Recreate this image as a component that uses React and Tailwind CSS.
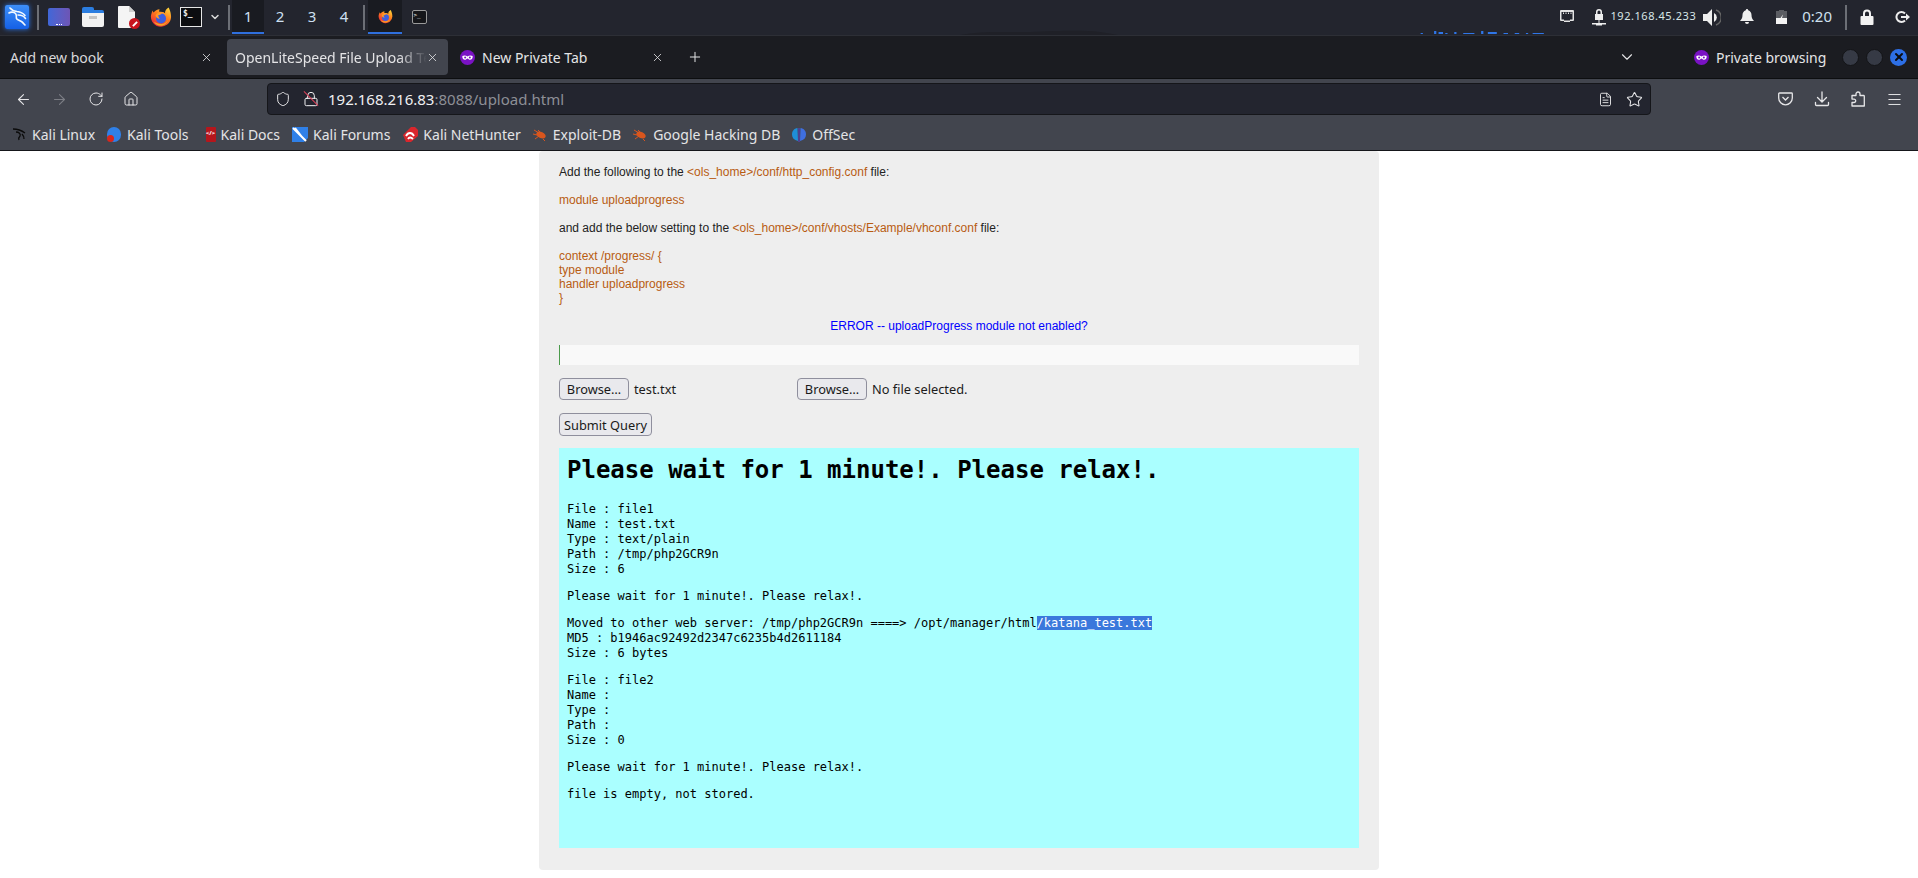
import React from "react";
import { ArrowLeft, ArrowRight, RotateCw, Home, Shield, Lock, FileText, Star, Menu, X, Plus, ChevronDown } from "lucide-react";

const uiFont = "font-['Noto_Sans',sans-serif]";

function Firefox({ size = 22, id }) {
  return (
    <svg width={size} height={size} viewBox="0 0 24 24">
      <defs>
        <linearGradient id={id} x1="0.8" y1="0" x2="0.2" y2="1">
          <stop offset="0" stopColor="#ffd43a" />
          <stop offset="0.45" stopColor="#ff7a1c" />
          <stop offset="1" stopColor="#e8203f" />
        </linearGradient>
      </defs>
      <path d="M20.5 1.5c.5 2 2.5 5 2.5 10.500A11 11 0 1 1 1.800 7.500c.3-1 .6-1.800 1.200-2.500 0 1 .4 1.700 1 2.200C5.500 5 8 3.800 10.500 3.500 9.800 5 10 6 10.500 6.500c2.500-.5 5 .5 6 2-.6-3 1-5.500 4-7z" fill={`url(#${id})`} />
      <circle cx="12" cy="13.500" r="5.500" fill="#3d5fe0" />
      <path d="M6 10c1.500-2.500 4-3.500 6.500-3.500 2.500 0 4.500 1.500 5.500 3.500-2-1.500-4-2-5.500-1.500-.5 1-2 1.500-3.500 1.500 0 1 .5 3 2 4-3 0-5-2-5-4z" fill="#ff9a28" />
      <path d="M4 17c2 4 6 5 9 4.500 3-.5 6-3 6.500-6-1.500 2.500-4 4-7 4-3.500 0-6-1-8.500-2.500z" fill="#f5a524" />
    </svg>
  );
}

function KaliLogo() {
  return (
    <div className="w-6 h-6 rounded-[2px] bg-gradient-to-b from-[#3d8ef8] to-[#1560e6] shadow-[0_0_5px_#2a78f0] flex items-center justify-center">
      <svg width="24" height="24" viewBox="0 0 24 24" fill="none" stroke="#f2f8ff" strokeWidth="1.600" strokeLinecap="round" strokeLinejoin="round">
        <path d="M5 3c1.500 2 4 3 7 3.500 3.500.5 6 1.500 8 4" />
        <path d="M4 8c2-1.500 5-1 6.500.5 1.500 1.500 .5 3.500 1 5 .5 1.500 3 1.500 5 3 1.500 1 2.500 2.500 3.500 3.500" />
        <path d="M13 10c3 0 6 1 7.500 3.500" />
      </svg>
    </div>
  );
}

function Sep() {
  return <div className="w-0.5 h-[25px] bg-[#6c6f76] shrink-0" />;
}

function TerminalBig() {
  return (
    <div className="w-[22px] h-5 bg-[#0c0d10] border border-[#e6e6e6] text-[#eee] font-['DejaVu_Sans_Mono',monospace] text-[8px] font-bold leading-[11px] pl-0.5">$_</div>
  );
}

function PrivateMask({ size = 15 }) {
  return (
    <svg width={size} height={size} viewBox="0 0 16 16" className="shrink-0">
      <circle cx="8" cy="8" r="8" fill="#7a12c4" />
      <path d="M2.500 6.500C4 5.500 6.500 5.800 8 6.800 9.500 5.800 12 5.500 13.500 6.500c.3 2.500-1 4-2.700 4C9.500 10.500 9 9 8 9s-1.500 1.500-2.800 1.500c-1.700 0-3-1.500-2.700-4z" fill="#fff" />
      <circle cx="5.500" cy="8" r="1.100" fill="#7a12c4" />
      <circle cx="10.500" cy="8" r="1.100" fill="#7a12c4" />
    </svg>
  );
}

function Workspace({ n, active }) {
  return (
    <div className={`w-8 h-[34px] flex items-center justify-center text-[15px] text-[#cfe0f2] border-b-2 ${active ? "bg-[#191b21] border-[#2f6fdd]" : "border-transparent"}`}>{n}</div>
  );
}

function TopPanel() {
  return (
    <div className={`relative h-[36px] bg-[#23252e] border-b border-[#2d2f36] flex items-start ${uiFont} overflow-hidden`}>
      <div className="ml-[5px] mt-[5px]"><KaliLogo /></div>
      <div className="ml-[8px] mt-[5px]"><Sep /></div>
      <div className="ml-[9px] mt-[8px] w-[22px] h-[18px] rounded-[2px] bg-gradient-to-r from-[#3f67d8] to-[#6d55b5] flex items-end justify-center pb-px">
        <span className="w-[6px] h-0.5 border-b border-dotted border-white" />
      </div>
      <div className="ml-[12px] mt-[7px] w-[22px] h-[20px] relative">
        <div className="absolute left-0 top-0 w-[12px] h-[6px] bg-[#2b7de0] rounded-t-[2px]" />
        <div className="absolute left-0 right-0 top-[3px] h-[4px] bg-[#2b7de0] rounded-t-[2px]" />
        <div className="absolute left-0 right-0 top-[6px] bottom-0 bg-[#f2f2f2] rounded-b-[2px] flex justify-center pt-[3px]">
          <span className="w-[8px] h-[3px] bg-[#c4c4c4]" />
        </div>
      </div>
      <div className="ml-[14px] mt-[6px] w-[22px] h-[23px] relative">
        <svg width="18" height="22" viewBox="0 0 18 22"><path d="M1 0h10l6 6v15a1 1 0 0 1-1 1H1a1 1 0 0 1-1-1V1a1 1 0 0 1 1-1z" fill="#f4f4f4" /><path d="M11 0l6 6h-6z" fill="#cfcfcf" /></svg>
        <div className="absolute right-0 bottom-0 w-[11px] h-[11px] rounded-full bg-[#c8141e] flex items-center justify-center">
          <span className="w-[6px] h-[2px] bg-white -rotate-45" />
        </div>
      </div>
      <div className="ml-[10px] mt-[6px]"><Firefox id="ff1" /></div>
      <div className="ml-[8px] mt-[7px]"><TerminalBig /></div>
      <ChevronDown size={12} strokeWidth={3} color="#d8d8d8" className="ml-[7px] mt-[11px]" />
      <div className="ml-[7px] mt-[5px]"><Sep /></div>
      <div className="ml-[2px] flex">
        <Workspace n="1" active />
        <Workspace n="2" />
        <Workspace n="3" />
        <Workspace n="4" />
      </div>
      <div className="ml-[3px] mt-[5px]"><Sep /></div>
      <div className="ml-[3px] w-[34px] h-[34px] bg-[#191b21] border-b-2 border-[#2f6fdd] flex items-center justify-center"><Firefox size={15} id="ff2" /></div>
      <div className="w-[34px] h-[34px] flex items-center justify-center">
        <div className="w-[15px] h-[14px] bg-[#15161a] border border-[#9a9a9a] rounded-[2px] text-white font-['DejaVu_Sans_Mono',monospace] text-[6px] leading-[8px] pl-px">&gt;_</div>
      </div>

      {/* wallpaper bits behind the panel */}
      <svg className="absolute left-[900px] bottom-0" width="700" height="12" viewBox="0 0 700 12">
        <path d="M60 12C80 8 100 9 130 9c30-1 50-2 70 0 10 1 15 3 20 3z" fill="#1f2027" />
        <path d="M522 10h2v1h-2zM534 8h2v3h-2zM538 9h4v2h-4zM544 10h2v1h-2zM552 9h2v2h-2zM560 10h10v1h-10zM576 8h2v3h-2zM582 9h8v2h-8zM596 10h4v1h-4zM606 10h4v1h-4zM616 10h2v1h-2zM622 10h10v1h-10z" fill="#2f76e8" transform="translate(-64 0) scale(1.120 1)" />
      </svg>

      <div className="relative ml-auto flex items-start text-[#e8e8e8]">
        <svg width="14" height="13" viewBox="0 0 14 13" className="mt-[10px]"><path d="M1 0h12a1 1 0 0 1 1 1v9a1 1 0 0 1-1 1h-3v1H4v-1H1a1 1 0 0 1-1-1V1a1 1 0 0 1 1-1z" fill="#e4e4e4" /><path d="M1.500 2h11v7.500h-2.500v1H4v-1H1.500z" fill="#23252e" /><path d="M3 2.500h1v1.500H3zm2.500 0h1v1.500h-1zm2.500 0h1v1.500H8zm2.500 0h1v1.500h-1z" fill="#e4e4e4" /></svg>
        <svg width="14" height="19" viewBox="0 0 14 19" className="ml-[18px] mt-[8px]"><path d="M4 6V4a3 3 0 0 1 6 0v2h1v6H3V6zm1.500 0h3V4a1.500 1.500 0 0 0-3 0z" fill="#eee" /><path d="M6.500 12h1v3H14v1.500H10v1H4v-1H0V15h6.500z" fill="#eee" /></svg>
        <span className="ml-[4px] mt-[8px] text-[11px] leading-[16px] tracking-[0.55px] text-[#d8e6e6]">192.168.45.233</span>
        <svg width="18" height="17" viewBox="0 0 18 17" className="ml-[7px] mt-[9px]"><path d="M0 5h4l5-5v17l-5-5H0z" fill="#eee" /><path d="M11 4a5 5 0 0 1 0 9z" fill="#eee" /><path d="M13 1a8 8 0 0 1 0 15" fill="none" stroke="#666" strokeWidth="1.500" /></svg>
        <svg width="14" height="15" viewBox="0 0 14 15" className="ml-[19px] mt-[9px]"><path d="M7 0a1.200 1.200 0 0 1 1.200 1.200C10.500 2 11.500 4 11.500 6c0 3 1 4 2.500 6H0c1.500-2 2.500-3 2.500-6 0-2 1-4 3.300-4.800A1.200 1.200 0 0 1 7 0zM5 13h4a2 2 0 0 1-4 0z" fill="#eee" /></svg>
        <svg width="11" height="14" viewBox="0 0 11 14" className="ml-[22px] mt-[10px]"><path d="M3 1V0h5v1h3v13H0V1z" fill="#5b5d63" /><path d="M0 8h4.500L7 4.500 6 8h5v6H0z" fill="#f4f4f4" /></svg>
        <span className="ml-[15px] mt-[6px] text-[15px] leading-[20px] text-[#cfe0ef]">0:20</span>
        <div className="ml-[13px] mt-[5px]"><Sep /></div>
        <svg width="14" height="16" viewBox="0 0 14 16" className="ml-[13px] mt-[9px]"><path d="M3 7V4.500a4 4 0 0 1 8 0V7h1.500a1 1 0 0 1 1 1v7a1 1 0 0 1-1 1h-11a1 1 0 0 1-1-1V8a1 1 0 0 1 1-1zm2 0h4V4.500a2 2 0 0 0-4 0z" fill="#f2f2f2" /></svg>
        <svg width="15" height="12" viewBox="0 0 15 12" className="ml-[21px] mr-[8px] mt-[11px]"><path d="M10 2.500A5 5 0 1 0 10 9.500" fill="none" stroke="#eee" strokeWidth="2" /><path d="M6 5h5V2.500L15 6l-4 3.500V7H6z" fill="#eee" /></svg>
      </div>
    </div>
  );
}

function TabBar() {
  return (
    <div className={`h-[43px] bg-[#1b1c21] border-b border-[#0d0e10] flex items-center text-[14px] text-[#e4e4e6] ${uiFont}`}>
      <div className="w-[227px] flex items-center pl-[10px] shrink-0">
        <span className="w-[190px] text-[#d8d8da]">Add new book</span>
        <X size={13} strokeWidth={1.5} />
      </div>
      <div className="w-[221px] h-[36px] rounded-[4px] bg-[#42454e] flex items-center pl-[8px] shrink-0">
        <span className="w-[192px] overflow-hidden whitespace-nowrap [mask-image:linear-gradient(to_right,black_85%,transparent)]">OpenLiteSpeed File Upload Test</span>
        <X size={13} strokeWidth={1.5} className="ml-[-1px]" />
      </div>
      <div className="ml-[12px] flex items-center shrink-0">
        <PrivateMask />
        <span className="ml-[7px] w-[169px]">New Private Tab</span>
        <X size={13} strokeWidth={1.5} />
      </div>
      <Plus size={16} strokeWidth={1.5} className="ml-[23px]" />
      <ChevronDown size={18} strokeWidth={1.5} className="ml-auto mr-[58px]" />
      <PrivateMask />
      <span className="ml-[7px] w-[126px]">Private browsing</span>
      <div className="flex gap-[7px] mr-[11px]">
        <span className="w-[17px] h-[17px] rounded-full bg-[#363a45] border border-[#131417]" />
        <span className="w-[17px] h-[17px] rounded-full bg-[#363a45] border border-[#131417]" />
        <span className="w-[17px] h-[17px] rounded-full bg-[#2d6fe6] flex items-center justify-center"><X size={12} strokeWidth={4} color="#0b0c10" /></span>
      </div>
    </div>
  );
}

function NavBar() {
  return (
    <div className={`h-[40px] bg-[#42454e] flex items-center text-[#e6e6e8] ${uiFont}`}>
      <ArrowLeft size={17} strokeWidth={1.5} className="ml-[15px]" />
      <ArrowRight size={17} strokeWidth={1.5} color="#7c7e85" className="ml-[19px]" />
      <RotateCw size={16} strokeWidth={1.5} className="ml-[20px]" />
      <Home size={16} strokeWidth={1.5} className="ml-[19px]" />
      <div className="ml-[128px] w-[1384px] h-[32px] bg-[#23252f] border border-[#15161a] rounded-[4px] flex items-center text-[15px] shrink-0">
        <Shield size={16} strokeWidth={1.5} className="ml-[7px]" />
        <span className="ml-[12px] relative text-[#f0f0f2]">
          <Lock size={16} strokeWidth={1.5} />
          <span className="absolute left-[-2px] top-[7px] w-[20px] h-px bg-[#e0405a] rotate-45" />
        </span>
        <span className="ml-[9px] text-[#f0f0f2]">192.168.216.83<span className="text-[#8d8f96]">:8088/upload.html</span></span>
        <FileText size={15} strokeWidth={1.5} className="ml-auto" />
        <Star size={17} strokeWidth={1.5} className="ml-[13px] mr-[7px]" />
      </div>
      <svg width="15" height="14" viewBox="0 0 15 14" className="ml-[127px]" fill="none" stroke="#e6e6e8" strokeWidth="1.300"><path d="M1.500 1h12a.8.8 0 0 1 .8.800V6a6.800 6.800 0 0 1-13.600 0V1.800A.8.8 0 0 1 1.500 1z" /><path d="M4.500 5l3 3 3-3" /></svg>
      <svg width="16" height="16" viewBox="0 0 16 16" className="ml-[21px]" fill="none" stroke="#e6e6e8" strokeWidth="1.300" strokeLinecap="round" strokeLinejoin="round"><path d="M8 1v9.500M3.500 6.500L8 11l4.500-4.500" /><path d="M1.500 11.500v2a1 1 0 0 0 1 1h11a1 1 0 0 0 1-1v-2" /></svg>
      <svg width="16" height="16" viewBox="0 0 16 16" className="ml-[20px]" fill="none" stroke="#e6e6e8" strokeWidth="1.300" strokeLinejoin="round"><path d="M2 4.500h4V3a2 2 0 0 1 4 0v1.500h3.500a.8.8 0 0 1 .8.800V15H2V11.500h2a1.700 1.700 0 0 0 0-3.400H2z" /></svg>
      <Menu size={17} strokeWidth={1.4} className="ml-[20px]" />
    </div>
  );
}

function Bookmark({ icon, label, gap, left }) {
  return (
    <div className={`flex items-center ${left}`}>
      {icon}
      <span className={gap}>{label}</span>
    </div>
  );
}

function Bug() {
  return (
    <svg width="15" height="12" viewBox="0 0 15 12" fill="#d9561e">
      <ellipse cx="8" cy="6" rx="5" ry="3" transform="rotate(25 8 6)" />
      <path d="M1 1l5 3M0 5l4 1M2 10l4-3M10 10l2 2M5 1l2 2" stroke="#d9561e" strokeWidth="1" fill="none" />
    </svg>
  );
}

function BookmarksBar() {
  return (
    <div className={`h-[32px] bg-[#42454e] border-b border-[#15161a] flex items-center text-[14px] text-[#e4e4e6] ${uiFont}`}>
      <Bookmark
        left="ml-[12px]"
        gap="ml-[5px]"
        label="Kali Linux"
        icon={<svg width="15" height="15" viewBox="0 0 15 15" fill="none" stroke="#0b0b0b" strokeWidth="1.300"><path d="M1 2c4 0 8 1 12 4M4 5c3 0 5 2 4 4-1 1-2 2-1 4M10 7c1 1 2 3 2 5" /></svg>}
      />
      <Bookmark
        left="ml-[12px]"
        gap="ml-[6px]"
        label="Kali Tools"
        icon={
          <span className="relative w-[14px] h-[15px]">
            <span className="absolute inset-0 rounded-full bg-[#2f80e8]" />
            <span className="absolute left-0 bottom-0 w-[7px] h-[7px] rounded-full bg-[#d8261c]" />
          </span>
        }
      />
      <Bookmark
        left="ml-[15px]"
        gap="ml-[5px]"
        label="Kali Docs"
        icon={<span className="w-[10px] h-[15px] bg-[#b5161c] rounded-[1px] ml-[2px] text-white text-[6px] leading-[12px] text-center font-bold">&lt;/&gt;</span>}
      />
      <Bookmark
        left="ml-[12px]"
        gap="ml-[5px]"
        label="Kali Forums"
        icon={<svg width="16" height="15" viewBox="0 0 16 15"><path d="M0 0h16v11l-4 4H0z" fill="#2f80e8" /><path d="M1 1l13 13M3 1l7 9" stroke="#fff" strokeWidth="2" /></svg>}
      />
      <Bookmark
        left="ml-[13px]"
        gap="ml-[5px]"
        label="Kali NetHunter"
        icon={<svg width="15" height="15" viewBox="0 0 15 15"><path d="M0 8L8 0h4l3 3v6L8 15H3z" fill="#d9262c" /><path d="M3 9c2-4 6-4 8 0M5 12c1-2 3-2 5 0" stroke="#fff" strokeWidth="1.800" fill="none" /></svg>}
      />
      <Bookmark left="ml-[12px]" gap="ml-[5px]" label="Exploit-DB" icon={<Bug />} />
      <Bookmark left="ml-[12px]" gap="ml-[5px]" label="Google Hacking DB" icon={<Bug />} />
      <Bookmark
        left="ml-[12px]"
        gap="ml-[6px]"
        label="OffSec"
        icon={<svg width="14" height="15" viewBox="0 0 14 15"><path d="M5.500 1C2 1.500 0 4 0 7.500S2 13 6 14z" fill="#1f8fd8" /><path d="M8.500 1C12 1.500 14 4 14 7.500S12 13 8 14z" fill="#3f6fe0" /><path d="M6.500 1h1v14h-1z" fill="#5a3fd0" /></svg>}
      />
    </div>
  );
}

function FileRow({ label, fileName, width }) {
  return (
    <div className={`flex items-center ${width}`}>
      <button className="h-[22px] w-[70px] bg-[#e9e9ed] border border-[#8f8f9d] rounded-[4px] text-[12.800px] text-[#1a1a1a] shrink-0">{label}</button>
      <span className="ml-[5px] text-[12.800px] text-[#1c1c1c]">{fileName}</span>
    </div>
  );
}

function UploadPage() {
  return (
    <div className="flex-1 min-h-0 bg-white">
      <div className="ml-[539px] w-[840px] h-[719px] bg-[#eeeeee] rounded-[4px] px-[20px] pt-[14px] font-['Liberation_Sans',Arial,sans-serif] text-[12px] leading-[14px] text-[#222]">
        <p>Add the following to the <span className="text-[#b85c12]">&lt;ols_home&gt;/conf/http_config.conf</span> file:</p>
        <p className="mt-[14px] text-[#b85c12]">module uploadprogress</p>
        <p className="mt-[14px]">and add the below setting to the <span className="text-[#b85c12]">&lt;ols_home&gt;/conf/vhosts/Example/vhconf.conf</span> file:</p>
        <p className="mt-[14px] text-[#b85c12]">context /progress/ {"{"}<br />type module<br />handler uploadprogress<br />{"}"}</p>
        <p className="mt-[14px] text-center text-[#0000ff]">ERROR -- uploadProgress module not enabled?</p>
        <div className="mt-[12px] h-[20px] bg-[#f9f9f9] border-l border-[#4a9a4a]" />
        <div className={`mt-[13px] flex ${uiFont}`}>
          <FileRow label="Browse…" fileName="test.txt" width="w-[238px]" />
          <FileRow label="Browse…" fileName="No file selected." />
        </div>
        <button className={`block mt-[13px] h-[23px] w-[93px] bg-[#e9e9ed] border border-[#8f8f9d] rounded-[4px] text-[12.800px] text-[#1a1a1a] ${uiFont}`}>Submit Query</button>
        <div className="mt-[12px] h-[400px] bg-[#aaffff] px-[8px] pt-[8px] font-['DejaVu_Sans_Mono',monospace] text-[12px] leading-[15px] text-black">
          <h1 className="text-[24px] leading-[28px] font-bold">Please wait for 1 minute!. Please relax!.</h1>
          <p className="mt-[18px]">File : file1<br />Name : test.txt<br />Type : text/plain<br />Path : /tmp/php2GCR9n<br />Size : 6</p>
          <p className="mt-[12px]">Please wait for 1 minute!. Please relax!.</p>
          <p className="mt-[12px]">Moved to other web server: /tmp/php2GCR9n ====&gt; /opt/manager/html<span className="bg-[#3a78dc] text-white">/katana_test.txt</span><br />MD5 : b1946ac92492d2347c6235b4d2611184<br />Size : 6 bytes</p>
          <p className="mt-[12px]">File : file2<br />Name :<br />Type :<br />Path :<br />Size : 0</p>
          <p className="mt-[12px]">Please wait for 1 minute!. Please relax!.</p>
          <p className="mt-[12px]">file is empty, not stored.</p>
        </div>
      </div>
    </div>
  );
}

export default function App() {
  return (
    <div className="w-[1918px] h-[878px] flex flex-col overflow-hidden bg-white">
      <TopPanel />
      <TabBar />
      <NavBar />
      <BookmarksBar />
      <UploadPage />
    </div>
  );
}
